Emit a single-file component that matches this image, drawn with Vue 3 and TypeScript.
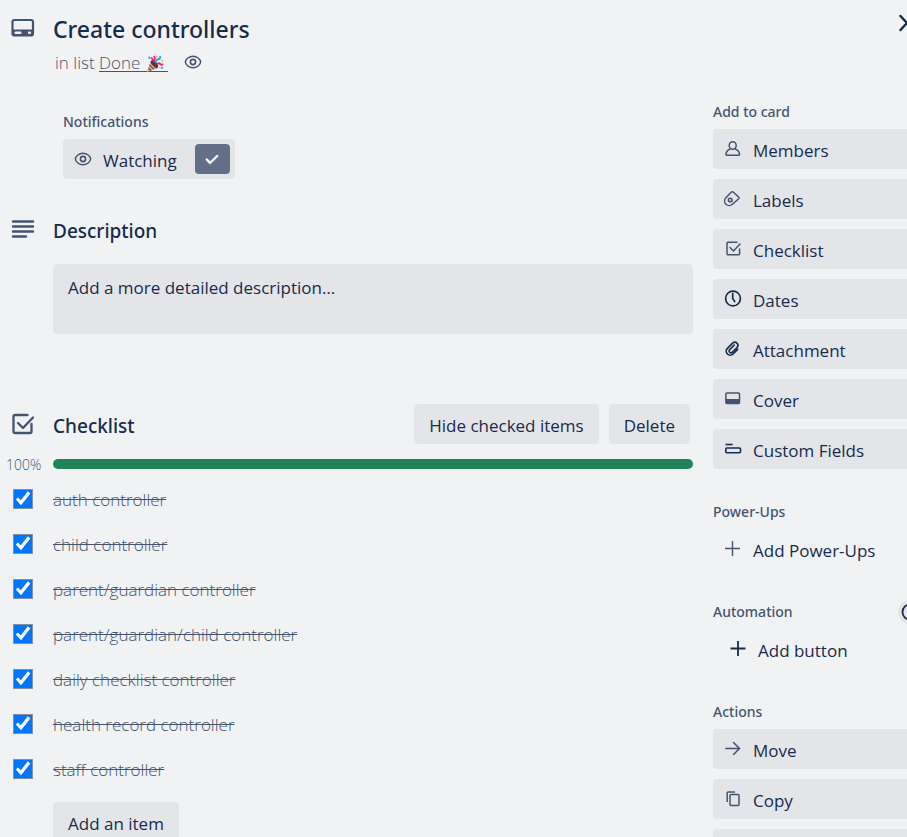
<script setup lang="ts">
import { ref, computed } from 'vue'

interface ChecklistItem {
  id: string
  text: string
  done: boolean
}

interface SideAction {
  label: string
  icon: string
}

const items = ref<ChecklistItem[]>([
  { id: 'auth', text: 'auth controller', done: true },
  { id: 'child', text: 'child controller', done: true },
  { id: 'parent', text: 'parent/guardian controller', done: true },
  { id: 'parent-child', text: 'parent/guardian/child controller', done: true },
  { id: 'daily', text: 'daily checklist controller', done: true },
  { id: 'health', text: 'health record controller', done: true },
  { id: 'staff', text: 'staff controller', done: true },
])

const progress = computed<number>(() =>
  Math.round((items.value.filter((item) => item.done).length / items.value.length) * 100),
)

const addActions: SideAction[] = [
  { label: 'Members', icon: 'member' },
  { label: 'Labels', icon: 'label' },
  { label: 'Checklist', icon: 'check' },
  { label: 'Dates', icon: 'clock' },
  { label: 'Attachment', icon: 'clip' },
  { label: 'Cover', icon: 'cover' },
  { label: 'Custom Fields', icon: 'fields' },
]
</script>

<template>
  <div class="card">
    <header class="card-header">
      <span class="gutter">
        <svg class="icon-lg" viewBox="0 0 30 30" aria-hidden="true">
          <rect x="4.5" y="6" width="20.5" height="15.5" rx="2" fill="none" stroke="currentColor" stroke-width="2.2" />
          <path d="M4 15.500h21.500v4.500a2 2 0 0 1-2 2H6a2 2 0 0 1-2-2z" fill="currentColor" />
          <rect x="6.500" y="17.500" width="7" height="2.500" rx="1" class="slot" />
          <rect x="20" y="17.500" width="3" height="2.500" rx="1" class="slot" />
        </svg>
      </span>
      <div class="heading">
        <h1 class="title">Create controllers</h1>
        <p class="location">
          <span class="location-text">in list <a href="#list" class="list-link">Done <svg class="party" viewBox="0 0 20 20" role="img" aria-label="party">
            <path d="M2 19 6.5 6.5Q12 9 14 14.5z" fill="#f7b436" />
            <path d="M4.7 11.5 9.6 16.3M3.5 15l3.2 2.5M6 8l6.4 7.2" stroke="#6b5bc8" stroke-width="1.7" />
            <ellipse cx="10" cy="10.6" rx="2.4" ry="5" transform="rotate(-43 10 10.6)" fill="#5c3a2c" />
            <path d="M9 8q2.500-3 .5-6M6 4q2 .5 2.500 2.500" fill="none" stroke="#f0218b" stroke-width="1.800" />
            <path d="M11 9q.500-3 3-3.500t2-3.500" fill="none" stroke="#1fb0ea" stroke-width="2" />
            <path d="M12.500 11q2-2 3.500-.500t3 0" fill="none" stroke="#f0218b" stroke-width="2" />
            <path d="M3.500 3h2v2h-2zM17 13.500h2v2h-2z" fill="#1fb0ea" />
            <path d="M11.500 2h1.800v1.800h-1.800zM17 6h2v2h-2zM15 14h1.500v1.500H15z" fill="#f9b52c" />
          </svg>&nbsp;</a></span>
          <svg class="icon" viewBox="0 0 20 20" aria-label="Watching this card" role="img">
            <path d="M10 4.200c3.600 0 7.600 2.900 7.600 5.800s-4 5.800-7.600 5.800S2.400 12.900 2.400 10 6.400 4.200 10 4.200z" fill="none" stroke="currentColor" stroke-width="1.500" />
            <circle cx="10" cy="10" r="2.600" fill="none" stroke="currentColor" stroke-width="1.600" />
          </svg>
        </p>
      </div>
      <button type="button" class="close" aria-label="Close">
        <svg viewBox="0 0 20 20" aria-hidden="true">
          <path d="m3.500 2 13 14M16.500 2l-13 14" fill="none" stroke="currentColor" stroke-width="2.500" stroke-linecap="round" />
        </svg>
      </button>
    </header>

    <div class="columns">
      <main class="main">
        <section class="notifications">
          <h3 class="label">Notifications</h3>
          <button type="button" class="watch">
            <svg class="icon" viewBox="0 0 20 20" aria-hidden="true">
              <path d="M10 4.200c3.600 0 7.600 2.900 7.600 5.800s-4 5.800-7.600 5.800S2.400 12.900 2.400 10 6.400 4.200 10 4.200z" fill="none" stroke="currentColor" stroke-width="1.500" />
              <circle cx="10" cy="10" r="2.600" fill="none" stroke="currentColor" stroke-width="1.600" />
            </svg>
            <span class="btn-text">Watching</span>
            <span class="tick">
              <svg class="icon" viewBox="0 0 20 20" aria-hidden="true">
                <path d="m4.800 10.500 3.200 3.500 7.200-7" fill="none" stroke="currentColor" stroke-width="2.400" stroke-linecap="round" stroke-linejoin="round" />
              </svg>
            </span>
          </button>
        </section>

        <section class="description">
          <div class="section-head">
            <span class="gutter">
              <svg class="icon-lg" viewBox="0 0 30 30" aria-hidden="true">
                <path d="M5 7.500h20M5 12.500h20M5 17.500h20M5 22.500h13" stroke="currentColor" stroke-width="2.400" stroke-linecap="round" />
              </svg>
            </span>
            <h2 class="section-title">Description</h2>
          </div>
          <button type="button" class="desc-box">Add a more detailed description…</button>
        </section>

        <section class="checklist">
          <div class="section-head">
            <span class="gutter">
              <svg class="icon-lg" viewBox="0 0 30 30" aria-hidden="true">
                <path d="M19.500 6H7a1.500 1.500 0 0 0-1.500 1.500v15A1.500 1.500 0 0 0 7 24h15a1.500 1.500 0 0 0 1.500-1.500V15" fill="none" stroke="currentColor" stroke-width="2.300" stroke-linecap="round" />
                <path d="m10 14 5 5L25 8.500" fill="none" stroke="currentColor" stroke-width="2.300" stroke-linecap="round" stroke-linejoin="round" />
              </svg>
            </span>
            <h2 class="section-title">Checklist</h2>
            <div class="head-actions">
              <button type="button" class="btn">Hide checked items</button>
              <button type="button" class="btn">Delete</button>
            </div>
          </div>
          <div class="progress">
            <span class="percent">{{ progress }}%</span>
            <div class="track">
              <div class="bar" :style="{ width: progress + '%' }"></div>
            </div>
          </div>
          <ul class="items">
            <li v-for="item in items" :key="item.id" class="item">
              <input :id="item.id" v-model="item.done" type="checkbox" class="box" />
              <label :for="item.id" class="item-text" :class="{ done: item.done }">{{ item.text }}</label>
            </li>
          </ul>
          <button type="button" class="btn add-item">Add an item</button>
        </section>
      </main>

      <aside class="side">
        <section class="group">
          <h3 class="label">Add to card</h3>
          <button v-for="action in addActions" :key="action.label" type="button" class="side-btn">
            <svg class="icon" :class="action.icon" viewBox="0 0 20 20" aria-hidden="true">
              <template v-if="action.icon === 'member'">
                <ellipse cx="9.700" cy="6.500" rx="3.500" ry="3.800" fill="none" stroke="currentColor" stroke-width="1.500" />
                <path d="M7.300 10C4.700 10.800 3.100 13 2.900 15.200c0 .700.300 1.100 1 1.100h11.600c.700 0 1-.400 1-1.100-.200-2.200-1.800-4.400-4.400-5.200" fill="none" stroke="currentColor" stroke-width="1.500" />
              </template>
              <template v-else-if="action.icon === 'label'">
                <path d="m8.200 3.300-5.300 5.400a4.800 4.800 0 0 0 0 6.500 4.800 4.800 0 0 0 6.500 0l6.300-5.500a1.100 1.100 0 0 0 .100-1.500l-5.300-4.900a1.600 1.600 0 0 0-2.300 0z" fill="none" stroke="currentColor" stroke-width="1.500" />
                <circle cx="7.200" cy="11" r="1.800" fill="none" stroke="currentColor" stroke-width="1.600" />
              </template>
              <template v-else-if="action.icon === 'check'">
                <path d="M14 3.200H5a1 1 0 0 0-1 1v10.600a1 1 0 0 0 1 1h10.600a1 1 0 0 0 1-1V10" fill="none" stroke="currentColor" stroke-width="1.500" stroke-linecap="round" />
                <path d="m7 8.500 3.500 3.500 6.500-7" fill="none" stroke="currentColor" stroke-width="1.500" stroke-linecap="round" />
              </template>
              <template v-else-if="action.icon === 'clock'">
                <circle cx="10" cy="9.500" r="7.400" fill="none" stroke="currentColor" stroke-width="1.700" />
                <path d="M9.700 4.500v5l2 3" fill="none" stroke="currentColor" stroke-width="1.700" stroke-linecap="round" />
              </template>
              <template v-else-if="action.icon === 'clip'">
                <g transform="rotate(45 10 10)" fill="none" stroke="currentColor" stroke-width="1.700" stroke-linecap="round">
                  <path d="M13.600 7v6.500a4 4 0 0 1-8 0V5.500a3.200 3.200 0 0 1 6.200 0v7.700a1.900 1.900 0 0 1-3.700 0V6.500" />
                </g>
              </template>
              <template v-else-if="action.icon === 'cover'">
                <rect x="2.900" y="4" width="13.600" height="10.600" rx="1" fill="none" stroke="currentColor" stroke-width="1.500" />
                <path d="M3 10h13.500v5H3z" fill="currentColor" />
              </template>
              <template v-else>
                <path d="M2.500 5.500h7.200" stroke="currentColor" stroke-width="1.600" />
                <rect x="2.800" y="9" width="14.700" height="4.800" rx="1" fill="none" stroke="currentColor" stroke-width="1.600" />
              </template>
            </svg>
            <span class="btn-text">{{ action.label }}</span>
          </button>
        </section>

        <section class="group">
          <h3 class="label">Power-Ups</h3>
          <button type="button" class="side-btn plain">
            <svg class="icon" viewBox="0 0 20 20" aria-hidden="true">
              <path d="M9.500 2v15M2 9.500h15" stroke="currentColor" stroke-width="1.400" />
            </svg>
            <span class="btn-text">Add Power-Ups</span>
          </button>
        </section>

        <section class="group">
          <div class="label-row">
            <h3 class="label">Automation</h3>
            <button type="button" class="help" aria-label="About automation">
              <svg viewBox="0 0 20 20" aria-hidden="true">
                <circle cx="10" cy="10" r="7.500" fill="none" stroke="currentColor" stroke-width="1.800" />
              </svg>
            </button>
          </div>
          <button type="button" class="side-btn plain indented">
            <svg class="icon dark" viewBox="0 0 20 20" aria-hidden="true">
              <path d="M10 2v15M2.500 9.500h15" stroke="currentColor" stroke-width="1.800" />
            </svg>
            <span class="btn-text">Add button</span>
          </button>
        </section>

        <section class="group">
          <h3 class="label">Actions</h3>
          <button type="button" class="side-btn">
            <svg class="icon" viewBox="0 0 20 20" aria-hidden="true">
              <path d="M2.800 9.500h14M10.500 3.500l6 6-6 6" fill="none" stroke="currentColor" stroke-width="1.500" stroke-linecap="round" />
            </svg>
            <span class="btn-text">Move</span>
          </button>
          <button type="button" class="side-btn">
            <svg class="icon" viewBox="0 0 20 20" aria-hidden="true">
              <path d="M4.200 13V4a1 1 0 0 1 1-1H12" fill="none" stroke="currentColor" stroke-width="1.500" />
              <rect x="7" y="5.500" width="9" height="11" rx="1" fill="none" stroke="currentColor" stroke-width="1.500" />
            </svg>
            <span class="btn-text">Copy</span>
          </button>
          <button type="button" class="side-btn" aria-label="More actions"></button>
        </section>
      </aside>
    </div>
  </div>
</template>

<style>
html,
body {
  background: #f1f2f4;
  overflow: hidden;
  height: 100%;
}
</style>

<style scoped>
.card {
  color: #172b4d;
  font-family: "Open Sans", "Noto Sans", sans-serif;
  font-size: 17px;
  line-height: 24px;
  height: 100vh;
  overflow: hidden;
}

h1,
h2,
h3,
p,
ul {
  margin: 0;
  padding: 0;
}

h1,
h2,
h3 {
  font-family: "Noto Sans", "Open Sans", sans-serif;
  font-weight: 500;
}

button {
  border: 0;
  margin: 0;
  padding: 0;
  background: none;
  color: inherit;
  font: inherit;
  font-weight: 500;
  cursor: pointer;
}

svg {
  display: block;
  flex: none;
}

.icon {
  width: 20px;
  height: 20px;
  color: #44546f;
}

.icon-lg {
  width: 30px;
  height: 30px;
  color: #44546f;
}

.icon.clock,
.icon.clip,
.icon.fields,
.icon.dark {
  color: #172b4d;
}

.slot {
  fill: #f1f2f4;
}

.gutter {
  flex: none;
  display: flex;
  width: 45px;
  padding-left: 8px;
}

.card-header {
  display: flex;
  padding-top: 14px;
}

.heading {
  flex: 1;
}

.title {
  font-size: 23px;
  line-height: 30px;
}

.location {
  display: flex;
  align-items: center;
  gap: 15px;
  height: 24px;
  padding: 6px 0 0 2px;
  color: #44546f;
}

.location-text {
  padding-top: 2px;
  font-weight: 300;
}

.list-link {
  color: inherit;
  text-decoration: none;
  background: linear-gradient(currentColor, currentColor) 0 20px / 100% 1px no-repeat;
}

.party {
  display: inline-block;
  width: 19px;
  height: 19px;
  vertical-align: -4px;
}

.close {
  width: 20px;
  height: 20px;
  margin-right: -10px;
}

.close svg {
  width: 20px;
  height: 20px;
}

.columns {
  display: flex;
  gap: 20px;
  padding-top: 28px;
}

.main {
  flex: 1;
  min-width: 0;
}

.label {
  font-size: 14px;
  line-height: 20px;
  color: #44546f;
}

.notifications {
  padding: 10px 0 0 63px;
}

.watch {
  display: flex;
  align-items: center;
  gap: 10px;
  height: 40px;
  margin-top: 7px;
  padding: 0 5px 0 10px;
  border-radius: 4px;
  background: #e4e5e9;
}

.btn-text {
  padding-top: 3px;
}

.tick {
  display: flex;
  align-items: center;
  justify-content: center;
  width: 35px;
  height: 30px;
  margin-left: 8px;
  border-radius: 4px;
  background: #626f86;
}

.tick .icon {
  color: #fff;
}

.section-head {
  display: flex;
  align-items: center;
  min-height: 40px;
}

.section-title {
  flex: 1;
  padding-top: 4px;
  font-size: 19px;
  line-height: 25px;
}

.description {
  padding-top: 30px;
}

.desc-box {
  display: flex;
  align-items: flex-start;
  width: calc(100% - 53px);
  height: 70px;
  margin: 15px 0 0 53px;
  padding: 12px 15px;
  border-radius: 4px;
  background: #e4e5e9;
}

.checklist {
  padding-top: 70px;
}

.head-actions {
  display: flex;
  gap: 10px;
  padding-right: 3px;
}

.btn {
  height: 40px;
  padding: 3px 15px 0;
  border-radius: 4px;
  background: #e4e5e9;
}

.progress {
  display: flex;
  align-items: center;
  height: 20px;
  margin-top: 10px;
}

.percent {
  flex: none;
  box-sizing: border-box;
  width: 53px;
  padding: 2px 0 0 6px;
  font-size: 14px;
  font-weight: 300;
  color: #44546f;
}

.track {
  flex: 1;
  height: 10px;
  border-radius: 5px;
  overflow: hidden;
  background: #dcdfe4;
}

.bar {
  height: 100%;
  background: #1f845a;
}

.items {
  list-style: none;
  padding-top: 2px;
}

.item {
  display: flex;
  align-items: center;
  gap: 20px;
  height: 45px;
  padding-left: 13px;
  color: #44546f;
  font-weight: 300;
}

.item-text {
  padding-top: 3px;
}

.done {
  text-decoration: line-through;
}

.box {
  appearance: none;
  flex: none;
  display: grid;
  width: 20px;
  height: 20px;
  margin: 0;
  border: 1px solid #8590a2;
  background: #fff;
}

.box:checked {
  background: #0075ff;
}

.box:checked::before {
  content: "";
  background: #fff;
  clip-path: polygon(10% 56%, 22% 44%, 38% 60%, 77% 10%, 91% 22%, 39% 87%);
}

.add-item {
  margin: 11px 0 0 53px;
}

.side {
  flex: none;
  width: 194px;
}

.group {
  display: flex;
  flex-direction: column;
  gap: 10px;
  padding-bottom: 33px;
}

.group > :first-child {
  margin-bottom: -3px;
}

.side-btn {
  display: flex;
  flex: none;
  align-items: center;
  gap: 10px;
  height: 40px;
  padding-left: 10px;
  border-radius: 4px 0 0 4px;
  background: #e4e5e9;
}

.plain {
  background: none;
}

.indented {
  padding-left: 15px;
}

.label-row {
  display: flex;
  align-items: center;
  justify-content: space-between;
}

.help {
  width: 24px;
  height: 24px;
  margin: -2px -15px -2px 0;
  border-radius: 12px;
  background: #e4e5e9;
}

.help svg {
  width: 20px;
  height: 20px;
  margin: 0 2px;
}
</style>
